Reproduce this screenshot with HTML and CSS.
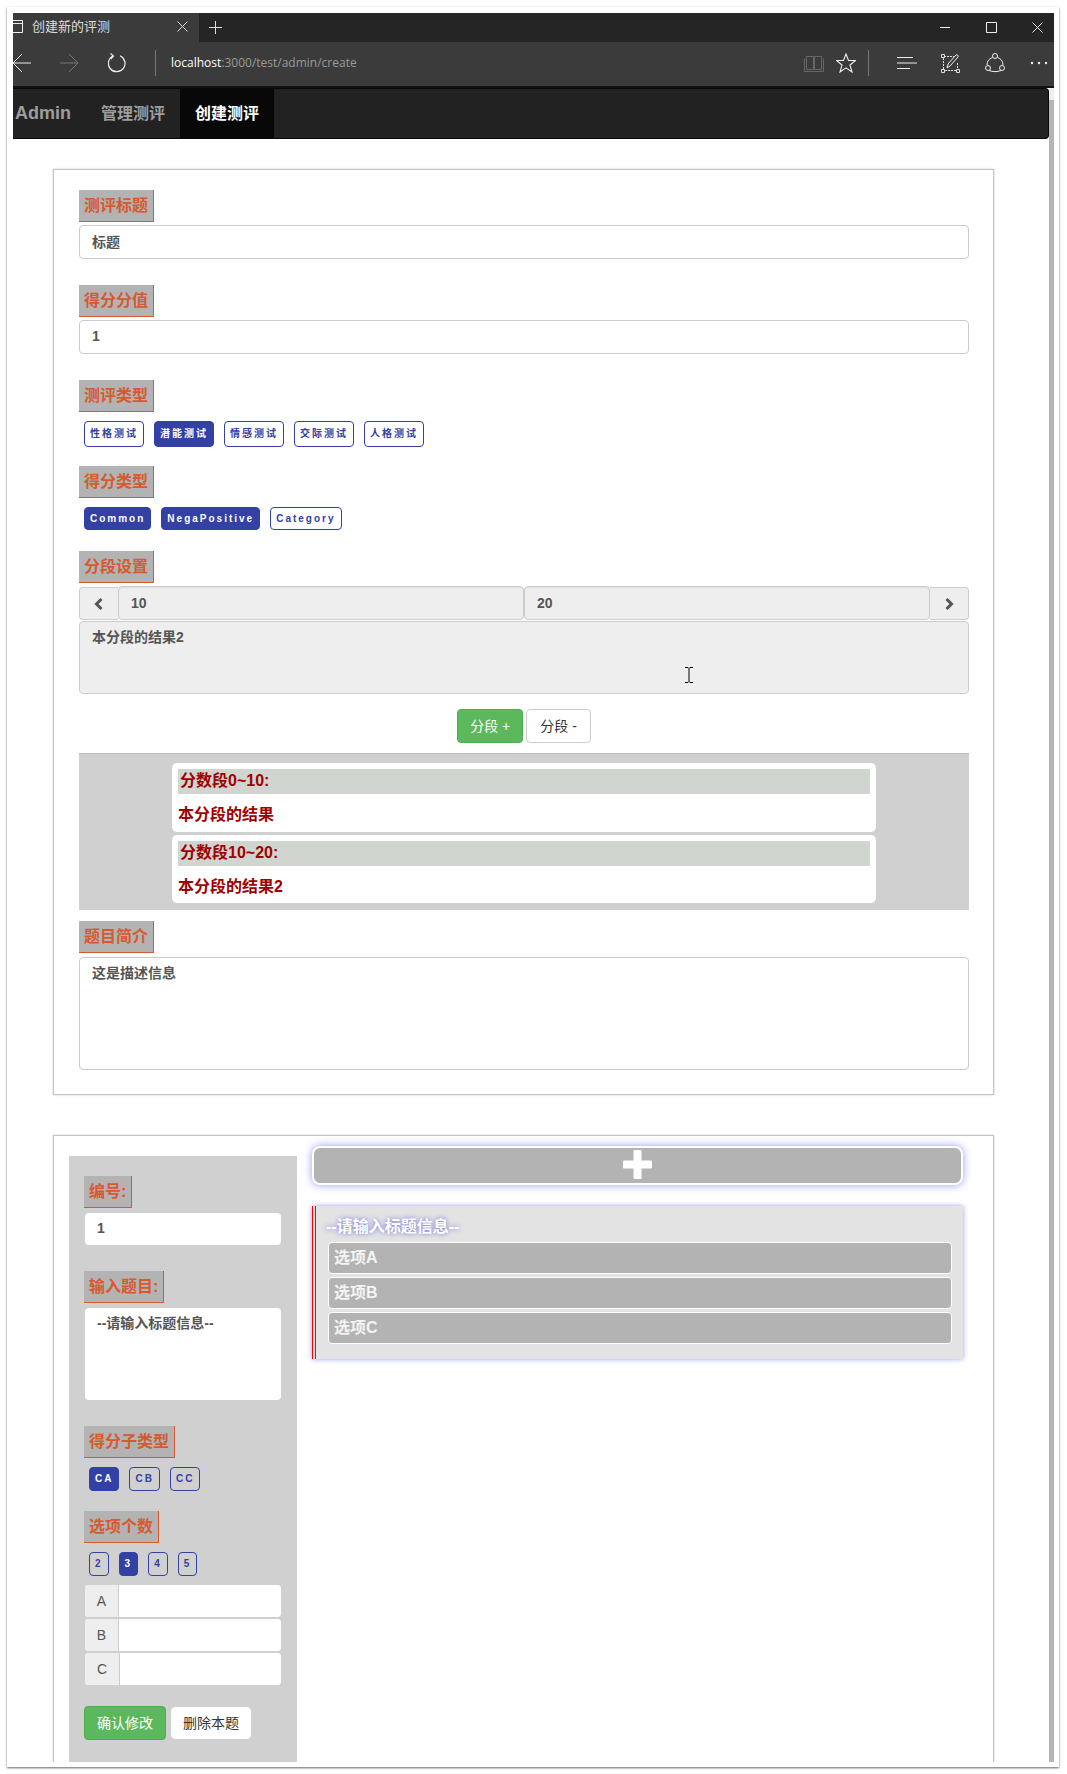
FILE: index.html
```html
<!DOCTYPE html>
<html lang="zh">
<head>
<meta charset="utf-8">
<title>创建新的评测</title>
<link rel="stylesheet" href="styles.css">
</head>
<body>
<div class="window">
<div class="viewport">
  <div class="titlebar">
    <div class="tab">
      <svg class="tab-icon" width="10" height="13" viewBox="0 0 10 13"><path d="M-1 .5H9.5V12.5H-1M-1 3.5H9.5" fill="none" stroke="#eee"/></svg>
      <span class="tab-title">创建新的评测</span>
      <svg class="tab-close" width="11" height="11" viewBox="0 0 11 11"><path d="M.5 .5l10 10M10.500 .5l-10 10" stroke="#ddd" fill="none"/></svg>
    </div>
    <svg class="tab-new" width="13" height="13" viewBox="0 0 13 13"><path d="M6.500 0V13M0 6.500H13" stroke="#ddd" fill="none"/></svg>
    <div class="win-controls">
      <svg width="11" height="11" viewBox="0 0 11 11"><path d="M0 5.500H10" stroke="#eee" fill="none"/></svg>
      <svg width="11" height="11" viewBox="0 0 11 11"><path d="M.5 .5H10.500V10.500H.5Z" stroke="#eee" fill="none"/></svg>
      <svg width="11" height="11" viewBox="0 0 11 11"><path d="M.5 .5l10 10M10.500 .5l-10 10" stroke="#eee" fill="none"/></svg>
    </div>
  </div>
  <div class="toolbar">
    <svg class="ic-back" width="18" height="20" viewBox="0 0 18 20"><path d="M18 10H0M9 1L0 10l9 9" stroke="#eee" fill="none"/></svg>
    <svg class="ic-forward" width="19" height="20" viewBox="0 0 19 20"><path d="M0 10H18M9 1l9 9-9 9" stroke="#777" fill="none"/></svg>
    <svg class="ic-refresh" width="18" height="20" viewBox="0 0 18 20"><path d="M12 2.800A8.300 8.300 0 1 1 5 3M2.500 .5L5.500 3 2.800 6" stroke="#eee" stroke-width="1.200" fill="none"/></svg>
    <span class="tool-sep"></span>
    <span class="url"><span class="url-host">localhost</span>:3000/test/admin/create</span>
    <svg class="ic-book" width="20" height="19" viewBox="0 0 20 19"><path d="M2.500 2.500h7v13h-7zM10.500 2.500h7v13h-7zM.5 4.500v13h19v-13" stroke="#666" fill="none"/></svg>
    <svg class="ic-star" width="20" height="20" viewBox="0 0 20 20"><path d="M10 1l2.500 6.500H19.500L14 12l2 7-6-4.200L4 19l2-7L.5 7.500H7.500Z" stroke="#eee" stroke-width="1.100" fill="none"/></svg>
    <span class="tool-sep tool-sep-right"></span>
    <svg class="ic-hub" width="20" height="14" viewBox="0 0 20 14"><path d="M0 1.500H16M0 7H20M0 12.500H13" stroke="#eee" fill="none"/></svg>
    <svg class="ic-note" width="19" height="19" viewBox="0 0 19 19"><path d="M3 2.500H13M2.500 4V16M4 16.500H16M16.500 9V15" stroke="#ddd" stroke-dasharray="2 1" fill="none"/><path d="M.5 .5h3v3h-3zM.5 15.500h3v3h-3zM15.500 15.500h3v3h-3z" stroke="#ddd" fill="none"/><path d="M6 14l1-4 8-9c1-1 3 1 2 2l-8 9z" stroke="#eee" fill="none"/></svg>
    <svg class="ic-share" width="20" height="20" viewBox="0 0 20 20"><path d="M7.500 4.500A8 8 0 0 0 2 12M12.500 4.500A8 8 0 0 1 18 12M4 17.500c4 1.500 8 1.500 12 0" stroke="#eee" fill="none"/><circle cx="10" cy="3" r="2.500" stroke="#eee" fill="none"/><circle cx="3" cy="15" r="2.500" stroke="#eee" fill="none"/><circle cx="17" cy="15" r="2.500" stroke="#eee" fill="none"/></svg>
    <svg class="ic-dots" width="18" height="4" viewBox="0 0 18 4"><circle cx="2" cy="2" r="1.200" fill="#eee"/><circle cx="9" cy="2" r="1.200" fill="#eee"/><circle cx="16" cy="2" r="1.200" fill="#eee"/></svg>
  </div>
  <div class="content">
    <div class="page">
      <nav class="navbar">
        <a class="brand">Admin</a>
        <a class="nav-link">管理测评</a>
        <a class="nav-link nav-active">创建测评</a>
      </nav>

      <section class="card card-main">
        <div class="field">
          <label class="field-label">测评标题</label>
          <input class="text-input" value="标题">
        </div>
        <div class="field">
          <label class="field-label">得分分值</label>
          <input class="text-input" value="1">
        </div>
        <div class="field-tags field-tags-tight">
          <label class="field-label">测评类型</label>
          <div class="tags tags-cjk">
            <span class="tag">性格测试</span>
            <span class="tag tag-on">潜能测试</span>
            <span class="tag">情感测试</span>
            <span class="tag">交际测试</span>
            <span class="tag">人格测试</span>
          </div>
        </div>
        <div class="field-tags field-tags-loose">
          <label class="field-label">得分类型</label>
          <div class="tags">
            <span class="tag tag-on">Common</span>
            <span class="tag tag-on">NegaPositive</span>
            <span class="tag">Category</span>
          </div>
        </div>
        <label class="field-label">分段设置</label>
        <div class="range-group">
          <span class="addon addon-left">
            <svg width="10" height="12" viewBox="0 0 10 12"><path d="M7.500 1L2.500 6l5 5" stroke="#555" stroke-width="3" fill="none"/></svg>
          </span>
          <input class="range-input" value="10">
          <input class="range-input" value="20">
          <span class="addon addon-right">
            <svg width="10" height="12" viewBox="0 0 10 12"><path d="M2.500 1l5 5-5 5" stroke="#555" stroke-width="3" fill="none"/></svg>
          </span>
        </div>
        <div class="result-wrap">
          <textarea class="result-input">本分段的结果2</textarea>
          <svg class="ibeam" width="8" height="16" viewBox="0 0 8 16"><path d="M0 .5h3l1 1 1-1h3M4 1.500V14.500M0 15.500h3l1-1 1 1h3" stroke="#000" fill="none"/></svg>
        </div>
        <div class="seg-buttons">
          <button class="btn btn-green">分段 +</button>
          <button class="btn btn-white">分段 -</button>
        </div>
        <div class="seg-preview">
          <div class="seg-item">
            <div class="seg-head">分数段0~10:</div>
            <div class="seg-body">本分段的结果</div>
          </div>
          <div class="seg-item">
            <div class="seg-head">分数段10~20:</div>
            <div class="seg-body">本分段的结果2</div>
          </div>
        </div>
        <label class="field-label label-intro">题目简介</label>
        <textarea class="intro-input">这是描述信息</textarea>
      </section>

      <section class="card card-question">
        <aside class="editor">
          <div class="editor-field">
            <label class="field-label">编号:</label>
            <input class="side-input" value="1">
          </div>
          <div class="editor-field">
            <label class="field-label">输入题目:</label>
            <textarea class="side-text">--请输入标题信息--</textarea>
          </div>
          <div class="field-tags">
            <label class="field-label">得分子类型</label>
            <div class="tags tags-small">
              <span class="tag tag-on">CA</span>
              <span class="tag tag-clear">CB</span>
              <span class="tag tag-clear">CC</span>
            </div>
          </div>
          <label class="field-label">选项个数</label>
          <div class="tags tags-small">
            <span class="tag tag-clear">2</span>
            <span class="tag tag-on">3</span>
            <span class="tag tag-clear">4</span>
            <span class="tag tag-clear">5</span>
          </div>
          <div class="option-inputs">
            <div class="option-row"><span class="option-key">A</span><input class="option-value"></div>
            <div class="option-row"><span class="option-key">B</span><input class="option-value"></div>
            <div class="option-row"><span class="option-key option-key-wide">C</span><input class="option-value"></div>
          </div>
          <div class="editor-actions">
            <button class="btn btn-green">确认修改</button>
            <button class="btn btn-plain">删除本题</button>
          </div>
        </aside>
        <div class="preview">
          <button class="add-btn" aria-label="添加">
            <svg width="29" height="29" viewBox="0 0 29 29"><path d="M10.500 1a1 1 0 0 1 1-1h6a1 1 0 0 1 1 1v9.500H28a1 1 0 0 1 1 1v6a1 1 0 0 1-1 1h-9.500V28a1 1 0 0 1-1 1h-6a1 1 0 0 1-1-1v-9.500H1a1 1 0 0 1-1-1v-6a1 1 0 0 1 1-1h9.500Z" fill="#fff"/></svg>
          </button>
          <div class="question">
            <div class="question-title">--请输入标题信息--</div>
            <div class="question-option">选项A</div>
            <div class="question-option">选项B</div>
            <div class="question-option">选项C</div>
          </div>
        </div>
      </section>
    </div>
    <div class="scrollbar"><span class="scroll-arrow"></span><span class="scroll-thumb"></span></div>
  </div>
</div>
</div>
</body>
</html>
```
FILE: styles.css
```css
* { box-sizing: border-box; }
html, body { margin: 0; height: 1774px; overflow: hidden; background: #fff; }
body { font-family: "Liberation Sans", "Noto Sans CJK SC", sans-serif; font-size: 14px; color: #333; }
input, textarea, button { font-family: inherit; margin: 0; outline: none; }
svg { display: block; flex: none; }

.window { width: 1052px; height: 1760px; margin: 7px 0 0 7px; padding: 6px 5px 5px 6px; background: #fff; box-shadow: 0 1px 2px rgba(0,0,0,.6); }
.viewport { height: 1749px; overflow: hidden; }

.titlebar { height: 29px; padding-bottom: 1px; background: #252525; display: flex; align-items: center; position: relative; }
.tab { width: 186px; height: 29px; margin-bottom: -1px; padding-bottom: 3px; background: #3b3b3b; display: flex; align-items: center; }
.tab-title { margin: 0 0 2px 9px; width: 146px; font: 13px/1 "Noto Sans CJK SC", sans-serif; color: #ddd; }
.tab-close { margin-left: -1px; }
.tab-new { margin-left: 10px; }
.win-controls { margin-left: auto; margin-right: 11px; display: flex; gap: 35px; }

.toolbar { height: 46px; padding-bottom: 2px; background: #3b3b3b; border-bottom: 2px solid #111; display: flex; align-items: center; }
.ic-forward { margin-left: 29px; }
.ic-refresh { margin-left: 29px; }
.tool-sep { width: 1px; height: 26px; background: #777; margin-left: 29px; }
.url { margin-left: 15px; font: 12px/1 "Open Sans", sans-serif; color: #9a9a9a; }
.url-host { color: #fff; }
.ic-book { margin-left: auto; }
.ic-star { margin-left: 12px; }
.tool-sep-right { margin-left: 12px; }
.ic-hub { margin-left: 28px; }
.ic-note { margin-left: 24px; }
.ic-share { margin-left: 25px; }
.ic-dots { margin-left: 25px; margin-right: 6px; }

.content { display: flex; }
.page { width: 1036px; }
.scrollbar { width: 5px; display: flex; flex-direction: column; }
.scroll-arrow { height: 12px; background: #eee; }
.scroll-thumb { flex: 1; background: #b5b5b5; }

.navbar { height: 51px; background: #222; border: 1px solid #080808; border-left: 0; border-radius: 0 4px 4px 0; display: flex; align-items: stretch; font-weight: bold; }
.brand { padding-left: 2px; width: 73px; font-size: 18px; line-height: 49px; color: #9d9d9d; }
.nav-link { padding: 0 15px; font-size: 16px; line-height: 49px; color: #9d9d9d; }
.nav-active { background: #080808; color: #fff; }

.card { width: 941px; margin-left: 40px; background: #fff; border: 1px solid #c4c4c4; box-shadow: 0 0 2px rgba(0,0,0,.2); }
.card-main { margin-top: 30px; padding: 20px 24px 24px 25px; }
.card-question { margin-top: 40px; padding-left: 15px; display: flex; align-items: flex-start; gap: 15px; }

.field-label { display: block; width: fit-content; height: 32px; padding: 0 5px; background: #b3b3b3; border-right: 1px solid #d9582e; border-bottom: 1px solid #d9582e; font-size: 16px; line-height: 31px; font-weight: bold; color: #d65a30; }
.field { margin-bottom: 26px; }
.field-tags { margin-bottom: 20px; }
.field-tags-tight { margin-bottom: 19px; }
.field-tags-loose { margin-bottom: 21px; }
.label-intro { margin-top: 11px; }

.text-input { display: block; width: 100%; height: 34px; margin-top: 3px; padding: 5px 12px 7px; border: 1px solid #ccc; border-radius: 4px; background: #fff; font-size: 14px; font-weight: bold; color: #555; }

.tags { display: flex; gap: 10px; margin-top: 9px; padding-left: 5px; }
.tag { height: 23px; padding: 0 5px; background: #fff; border: 1px solid #3340a4; border-radius: 4px; font-size: 10px; line-height: 21px; font-weight: bold; letter-spacing: 2px; color: #3340a4; white-space: nowrap; }
.tags-cjk .tag { height: 26px; line-height: 24px; }
.tags-small { margin-top: 9px; }
.tags-small .tag { height: 24px; line-height: 22px; }
.tag-clear { background: transparent; }
.tag-on { background: #3340a4; color: #fff; }

.range-group { display: flex; height: 34px; margin-top: 3px; }
.addon { width: 39px; height: 33px; margin-top: 1px; background: #eee; border: 1px solid #ccc; display: flex; align-items: center; justify-content: center; }
.addon-left { border-radius: 4px 0 0 4px; border-right: 0; }
.addon-right { border-radius: 0 4px 4px 0; border-left: 0; }
.range-input { flex: 1; min-width: 0; height: 34px; padding: 6px 12px; background: #eee; border: 1px solid #ccc; border-radius: 4px; box-shadow: inset 0 1px 1px rgba(0,0,0,.075); font-size: 14px; font-weight: bold; color: #555; }

.result-wrap { position: relative; margin-top: 1px; }
.result-input { display: block; width: 100%; height: 73px; padding: 5px 12px; background: #eee; border: 1px solid #ccc; border-radius: 4px; resize: none; font-size: 14px; line-height: 20px; font-weight: bold; color: #555; }
.ibeam { position: absolute; left: 606px; top: 46px; }

.seg-buttons { display: flex; justify-content: center; gap: 3px; margin-top: 15px; }
.btn { height: 34px; padding: 0 12px; border: 1px solid #ccc; border-radius: 4px; font-size: 14px; line-height: 1; background: #fff; color: #333; white-space: nowrap; }
.btn-green { background: #5cb85c; border-color: #4cae4c; color: #fff; }
.btn-white { padding: 0 13px; }
.btn-plain { height: 32px; margin-left: 5px; padding: 0 11px; border-color: #fff; }

.seg-preview { margin-top: 10px; padding: 9px 0 7px; background: #d0d0d0; border-top: 1px solid #bdbdbd; display: flex; flex-direction: column; align-items: center; gap: 3px; }
.seg-item { width: 704px; height: 69px; padding: 6px; background: #fff; border-radius: 5px; font-size: 16px; font-weight: bold; color: #a00000; }
.seg-item + .seg-item { height: 68px; }
.seg-head { height: 25px; padding-left: 2px; background: #d0d5d0; line-height: 24px; }
.seg-body { margin-top: 9px; line-height: 24px; }

.intro-input { display: block; width: 100%; height: 113px; margin-top: 4px; padding: 5px 12px; background: #fff; border: 1px solid #ccc; border-radius: 4px; resize: none; font-size: 14px; line-height: 20px; font-weight: bold; color: #555; }

.editor { width: 228px; height: 660px; margin-top: 20px; padding: 20px 15px; background: #d0d0d0; }
.editor-field { margin-bottom: 26px; }
.side-input { display: block; width: 196px; height: 32px; margin: 5px 0 0 1px; padding: 5px 12px 7px; border: 0; border-radius: 4px; background: #fff; font-size: 14px; font-weight: bold; color: #555; }
.side-text { display: block; width: 196px; height: 92px; margin: 5px 0 0 1px; padding: 5px 12px; border: 0; border-radius: 4px; background: #fff; resize: none; font-size: 14px; line-height: 20px; font-weight: bold; color: #555; }

.option-inputs { margin: 9px 0 0 1px; width: 196px; display: flex; flex-direction: column; gap: 2px; }
.option-row { height: 32px; display: flex; border-radius: 4px; overflow: hidden; background: #fff; }
.option-key { width: 34px; flex: none; background: #eee; border-right: 1px solid #ccc; text-align: center; line-height: 32px; font-size: 14px; color: #555; }
.option-key-wide { width: 35px; }
.option-value { flex: 1; min-width: 0; border: 0; background: #fff; }
.editor-actions { display: flex; align-items: center; margin-top: 21px; }

.preview { width: 651px; margin-top: 10px; }
.add-btn { display: flex; align-items: center; justify-content: center; width: 651px; height: 39px; padding: 0 0 2px; background: #b3b3b3; border: 2px solid #fff; border-radius: 8px; box-shadow: 0 0 8px #9999ff; }
.question { height: 153px; margin-top: 21px; padding: 36px 11px 0 12px; background: #e3e3e3; border-left: 4px double #f00; box-shadow: 0 0 5px #9999ff; position: relative; }
.question-title { position: absolute; left: 10px; top: 10px; font-size: 16px; line-height: 22px; font-weight: bold; color: #fff; text-shadow: 0 0 5px #6666dd; white-space: nowrap; }
.question-option { height: 32px; margin-bottom: 3px; padding-left: 5px; background: #b3b3b3; border: 1px solid #fff; border-radius: 4px; font-size: 16px; line-height: 30px; font-weight: bold; color: #f4f4f4; }
```
